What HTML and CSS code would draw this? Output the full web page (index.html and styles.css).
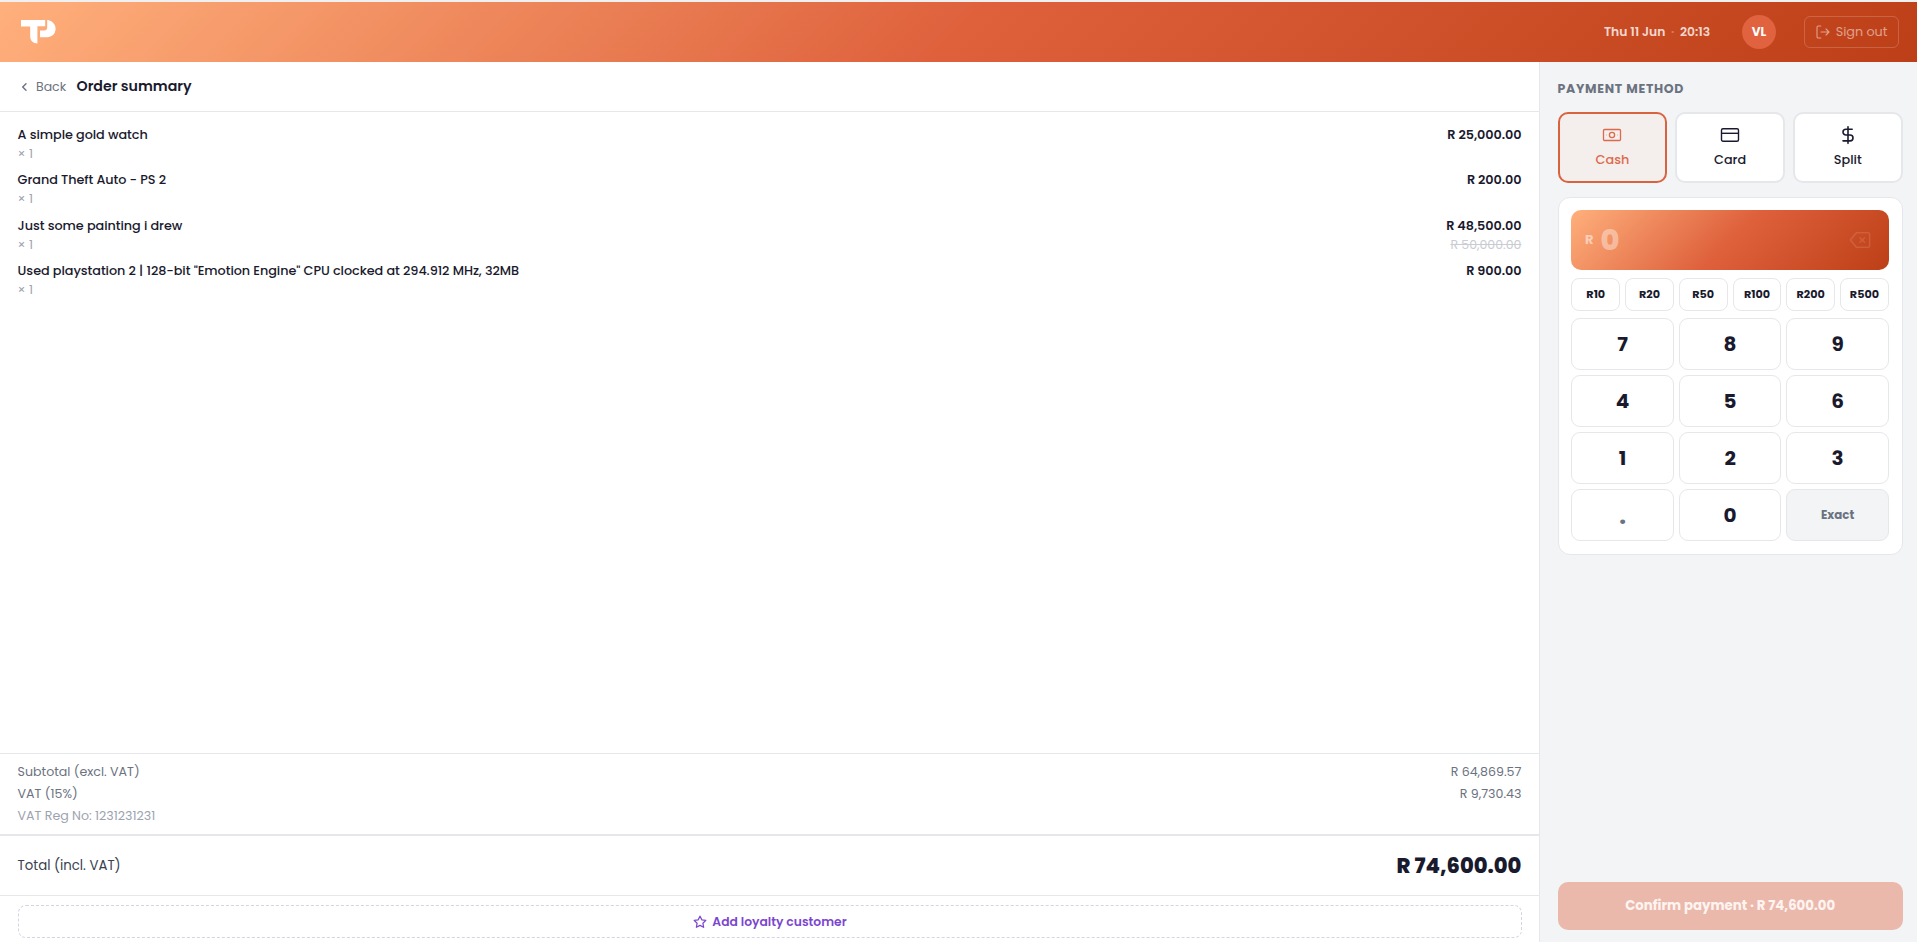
FILE: index.html
```html
<!DOCTYPE html>
<html lang="en">
<head>
<meta charset="utf-8">
<title>Order summary</title>
<link rel="stylesheet" href="styles.css">
</head>
<body>
<header class="topbar">
  <svg class="logo" width="35" height="24" viewBox="0 0 35 24" fill="#fff"><path d="M0 0H24.2V6.2H16.4V23.4C12 23.4 9.2 20.6 9.2 16.2V6.4H0Z"/><path d="M26.2 0C31.2.6 34.6 4.2 34.6 8.800C34.6 14 30.800 17.200 26 17.200H19V10.400H23.500Q26.200 10.400 26.200 7.600Z"/></svg>
  <div class="topbar-right">
    <div class="clock"><span>Thu 11 Jun</span><span class="dot">·</span><span>20:13</span></div>
    <div class="avatar">VL</div>
    <button class="signout"><svg width="14" height="14" viewBox="0 0 14 14" fill="none" stroke="currentColor" stroke-width="1.1" stroke-linecap="round" stroke-linejoin="round"><path d="M4.8 1H2.3Q1 1 1 2.300V11.700Q1 13 2.300 13H4.800M5 7H13M10 4L13 7L10 10"/></svg><span>Sign out</span></button>
  </div>
</header>
<div class="layout">
  <main class="order">
    <div class="order-head">
      <svg class="chev" width="7" height="10" viewBox="0 0 7 10" fill="none" stroke="#6b7280" stroke-width="1.4" stroke-linecap="round" stroke-linejoin="round"><path d="M5 1.700L1.700 5L5 8.300"/></svg>
      <span class="back">Back</span>
      <h1 class="title">Order summary</h1>
    </div>
    <div class="items">
      <div class="item"><div class="name">A simple gold watch</div><div class="price">R 25,000.00</div><div class="qty">× 1</div></div>
      <div class="item"><div class="name">Grand Theft Auto - PS 2</div><div class="price">R 200.00</div><div class="qty">× 1</div></div>
      <div class="item"><div class="name">Just some painting i drew</div><div class="price">R 48,500.00</div><div class="qty">× 1</div><div class="was">R 50,000.00</div></div>
      <div class="item"><div class="name">Used playstation 2 | 128-bit "Emotion Engine" CPU clocked at 294.912 MHz, 32MB</div><div class="price">R 900.00</div><div class="qty">× 1</div></div>
    </div>
    <div class="sums">
      <div class="sum"><span>Subtotal (excl. VAT)</span><span>R 64,869.57</span></div>
      <div class="sum"><span>VAT (15%)</span><span>R 9,730.43</span></div>
      <div class="sum reg"><span>VAT Reg No: 1231231231</span></div>
    </div>
    <div class="total"><span class="total-label">Total (incl. VAT)</span><span class="total-amt">R 74,600.00</span></div>
    <div class="loyalty">
      <button class="loyalty-btn"><svg width="14" height="14" viewBox="0 0 24 24" fill="none" stroke="currentColor" stroke-width="2.200" stroke-linejoin="round"><path d="M12 2L15.090 8.260L22 9.270L17 14.140L18.180 21.020L12 17.770L5.820 21.020L7 14.140L2 9.270L8.910 8.260Z"/></svg><span>Add loyalty customer</span></button>
    </div>
  </main>
  <aside class="pay">
    <h2 class="pay-title">PAYMENT METHOD</h2>
    <div class="methods">
      <button class="method active"><svg width="20" height="20" viewBox="0 0 20 20" fill="none" stroke="currentColor" stroke-width="1.300"><rect x="1.500" y="4.500" width="17" height="11" rx="1"/><circle cx="10" cy="10" r="2.600"/><path d="M4 10H4.600M15.400 10H16" stroke-opacity=".5"/></svg><span>Cash</span></button>
      <button class="method"><svg width="20" height="20" viewBox="0 0 20 20" fill="none" stroke="currentColor" stroke-width="1.400"><rect x="1.500" y="3.700" width="17" height="12.600" rx="1.500"/><path d="M1.500 8.300H18.500"/></svg><span>Card</span></button>
      <button class="method"><svg width="20" height="20" viewBox="0 0 24 24" fill="none" stroke="currentColor" stroke-width="1.900" stroke-linecap="round" stroke-linejoin="round"><path d="M12 2V22M17 5H9.500A3.500 3.500 0 0 0 9.500 12H14.500A3.500 3.500 0 0 1 14.500 19H6"/></svg><span>Split</span></button>
    </div>
    <section class="pad">
      <div class="display"><span class="cur">R</span><span class="val">0</span><svg class="bksp" width="22" height="22" viewBox="0 0 24 24" fill="none" stroke="currentColor" stroke-width="1.700" stroke-linecap="round" stroke-linejoin="round"><path d="M21 4H8L1.500 12L8 20H21A1.800 1.800 0 0 0 22.500 18.500V5.500A1.800 1.800 0 0 0 21 4ZM17 9.500L12 14.500M12 9.500L17 14.500"/></svg></div>
      <div class="chips"><button>R10</button><button>R20</button><button>R50</button><button>R100</button><button>R200</button><button>R500</button></div>
      <div class="keys">
        <button>7</button><button>8</button><button>9</button>
        <button>4</button><button>5</button><button>6</button>
        <button>1</button><button>2</button><button>3</button>
        <button class="point">.</button><button>0</button><button class="exact">Exact</button>
      </div>
    </section>
    <button class="confirm">Confirm payment · R 74,600.00</button>
  </aside>
</div>
</body>
</html>
```
FILE: styles.css
```css
* { box-sizing: border-box; }
body {
  margin: 0;
  height: 942px;
  overflow: hidden;
  display: flex;
  flex-direction: column;
  border-top: 2px solid #f0f0f1;
  background: #fff;
  color: #1a1a2e;
  font-family: Poppins, Inter, "Open Sans", sans-serif;
  font-size: 13px;
}
button { font: inherit; color: inherit; background: #fff; padding: 0; margin: 0; white-space: nowrap; }
svg { display: block; flex: none; }
h1, h2 { margin: 0; }

.topbar {
  height: 60px;
  flex: none;
  display: flex;
  align-items: center;
  justify-content: space-between;
  padding: 0 18px 0 21px;
  background: linear-gradient(135deg, #ffb07c 0%, #de613c 50%, #bd3f17 100%);
}
.topbar-right { display: flex; align-items: center; }
.clock { display: flex; width: 106px; margin-right: 32px; font-size: 12.300px; font-weight: 600; color: rgba(255,255,255,.8); white-space: nowrap; }
.dot { width: 15.500px; text-align: center; color: rgba(255,255,255,.3); }
.avatar { width: 34px; height: 34px; margin-right: 28px; border-radius: 50%; background: #e0623e; color: #fff; font-size: 12px; font-weight: 700; display: flex; align-items: center; justify-content: center; }
.signout { width: 95px; height: 32px; display: flex; align-items: center; justify-content: center; gap: 6px; background: transparent; border: 1px solid rgba(255,255,255,.18); border-radius: 6px; color: rgba(255,255,255,.5); font-size: 12.800px; letter-spacing: -.05px; }

.layout { flex: 1; display: flex; min-height: 0; }
.order { flex: 1; display: flex; flex-direction: column; min-width: 0; }
.order-head { height: 50px; flex: none; display: flex; align-items: center; padding-left: 21px; border-bottom: 1px solid #e5e7eb; }
.back { margin-left: 8px; width: 40.500px; color: #6b7280; font-size: 12.500px; }
.title { font-size: 14.200px; font-weight: 600; }
.items { flex: 1; padding: 12px 17.600px; }
.item { display: grid; grid-template-columns: 1fr auto; grid-template-rows: 21px 17px; height: 45.500px; align-items: center; white-space: nowrap; }
.name { font-size: 12.800px; font-weight: 500; letter-spacing: -.06px; }
.price { font-size: 12.800px; font-weight: 600; letter-spacing: -.06px; text-align: right; }
.qty { font-size: 12.500px; color: #9ca3af; }
.was { font-size: 12.500px; color: #c9ccd2; text-decoration: line-through; text-align: right; }
.sums { height: 81px; flex: none; border-top: 1px solid #e5e7eb; padding: 7px 17.600px 0; }
.sum { height: 22px; display: flex; align-items: center; justify-content: space-between; color: #6b7280; font-size: 12.600px; }
.reg { color: #9ca3af; }
.total { height: 62px; flex: none; border-top: 2px solid #e5e7eb; border-bottom: 1px solid #e5e7eb; padding: 0 17.600px; display: flex; align-items: center; justify-content: space-between; }
.total-label { font-size: 13.300px; color: #374151; }
.total-amt { font-size: 21px; font-weight: 800; }
.loyalty { height: 46px; flex: none; padding: 9px 17px 0 18px; }
.loyalty-btn { width: 100%; height: 33px; border: 1px dashed #d5d3e4; border-radius: 8px; color: #7b46cf; font-size: 12.300px; font-weight: 600; display: flex; align-items: center; justify-content: center; gap: 5px; }

.pay { width: 378px; flex: none; background: #f3f4f6; border-left: 1px solid #e5e7eb; padding: 18px 14.400px 12px 17.600px; display: flex; flex-direction: column; }
.pay-title { height: 18px; line-height: 18px; margin-bottom: 14px; font-size: 12.500px; font-weight: 700; color: #6b7280; letter-spacing: .7px; }
.methods { display: grid; grid-template-columns: repeat(3, 1fr); gap: 8px; margin-bottom: 14px; }
.method { height: 71px; border: 2px solid #e5e7eb; border-radius: 10px; display: flex; flex-direction: column; align-items: center; padding-top: 11px; gap: 6px; font-size: 12.800px; font-weight: 500; line-height: 18px; }
.active { border-color: #d9623f; background: #f4eeec; color: #dc6a4d; }
.pad { border: 1px solid #e5e7eb; border-radius: 12px; background: #fff; padding: 12px 12.800px 13px; display: flex; flex-direction: column; gap: 8px; }
.display { height: 60px; border-radius: 10px; background: linear-gradient(135deg, #ffb07c 0%, #de613c 50%, #bd3f17 100%); display: flex; align-items: center; padding: 0 18px 0 13.500px; }
.cur { width: 15.500px; font-size: 13px; font-weight: 700; color: rgba(255,255,255,.5); }
.val { font-size: 28.800px; font-weight: 800; line-height: 30px; color: rgba(255,255,255,.4); }
.bksp { margin-left: auto; color: rgba(255,255,255,.12); }
.chips { display: grid; grid-template-columns: repeat(6, 1fr); gap: 5px; }
.chips button { height: 33px; border: 1px solid #e5e7eb; border-radius: 8px; font-size: 11.200px; font-weight: 700; }
.keys { display: grid; grid-template-columns: repeat(3, 1fr); gap: 5px; margin-top: -1px; }
.keys button { height: 52px; border: 1px solid #e5e7eb; border-radius: 9px; font-size: 20px; font-weight: 700; }
.keys .point { font-size: 24px; color: #6b7280; }
.keys .exact { background: #f3f4f6; color: #6b7280; font-size: 11.800px; }
.confirm { margin-top: auto; height: 48px; flex: none; border: 0; border-radius: 10px; background: #ebb9ac; color: #fdf4f1; font-size: 13.300px; font-weight: 700; }
```
